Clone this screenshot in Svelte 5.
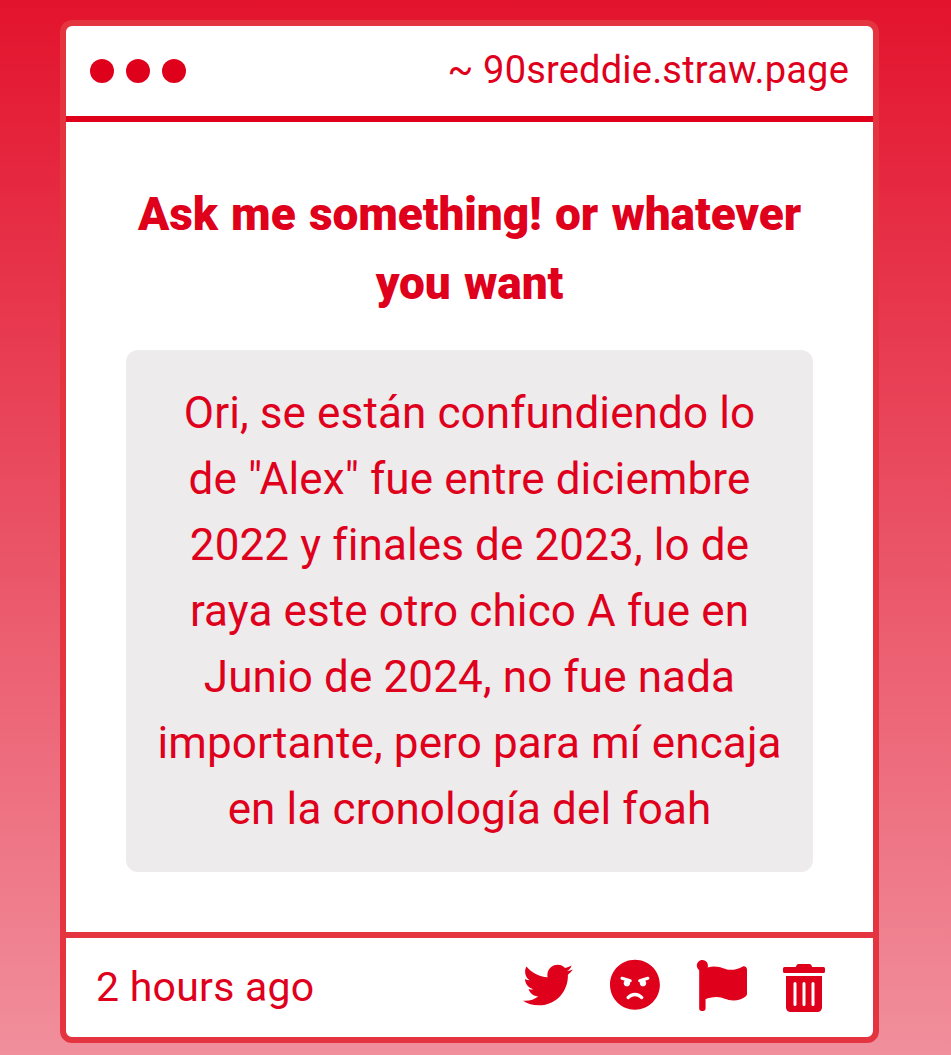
<script>
    let site = '90sreddie.straw.page';
    let title = 'Ask me something! or whatever you want';
    let message = 'Ori, se están confundiendo lo de "Alex" fue entre diciembre 2022 y finales de 2023, lo de raya este otro chico A fue en Junio de 2024, no fue nada importante, pero para mí encaja en la cronología del foah';
    let time = '2 hours ago';

    const actions = [
        {
            name: 'twitter',
            label: 'Share on Twitter',
            viewBox: '0 0 512 512',
            path: 'M459.37 151.716c.325 4.548.325 9.097.325 13.645 0 138.72-105.583 298.558-298.558 298.558-59.452 0-114.68-17.219-161.137-47.106 8.447.974 16.568 1.299 25.34 1.299 49.055 0 94.213-16.568 130.274-44.832-46.132-.975-84.792-31.188-98.112-72.772 6.498.974 12.995 1.624 19.818 1.624 9.421 0 18.843-1.3 27.614-3.573-48.081-9.747-84.143-51.98-84.143-102.985v-1.299c13.969 7.797 30.214 12.67 47.431 13.319-28.264-18.843-46.781-51.005-46.781-87.391 0-19.492 5.197-37.36 14.294-52.954 51.655 63.675 129.3 105.258 216.365 109.807-1.624-7.797-2.599-15.918-2.599-24.04 0-57.828 46.782-104.934 104.934-104.934 30.213 0 57.502 12.67 76.67 33.137 23.715-4.548 46.456-13.32 66.599-25.34-7.798 24.366-24.366 44.833-46.132 57.827 21.117-2.273 41.584-8.122 60.426-16.243-14.292 20.791-32.161 39.308-52.628 54.253z'
        },
        {
            name: 'angry',
            label: 'Block sender',
            viewBox: '0 0 496 512',
            path: 'M248 8C111 8 0 119 0 256s111 248 248 248 248-111 248-248S385 8 248 8zM136 240c0-9.3 4.1-17.5 10.5-23.4l-31-9.3c-8.5-2.5-13.3-11.5-10.7-19.9 2.5-8.5 11.4-13.2 19.9-10.7l80 24c8.5 2.5 13.3 11.5 10.7 19.9-2.1 6.9-8.4 11.4-15.3 11.4-.5 0-1.1-.2-1.7-.2.7 2.7 1.7 5.3 1.7 8.2 0 17.7-14.3 32-32 32S136 257.7 136 240zm168 154.2c-27.8-33.4-84.2-33.4-112.1 0-13.5 16.3-38.2-4.2-24.6-20.5 20-24 49.4-37.8 80.6-37.8s60.6 13.8 80.6 37.8c13.8 16.5-11.1 36.6-24.5 20.5zm76.6-186.9l-31 9.3c6.3 5.8 10.5 14.1 10.5 23.4 0 17.7-14.3 32-32 32s-32-14.3-32-32c0-2.9.9-5.6 1.7-8.2-.6.1-1.1.2-1.7.2-6.9 0-13.2-4.5-15.3-11.4-2.5-8.5 2.3-17.4 10.7-19.9l80-24c8.4-2.5 17.4 2.3 19.9 10.7 2.5 8.5-2.3 17.4-10.8 19.9z'
        },
        {
            name: 'flag',
            label: 'Report',
            viewBox: '0 0 512 512',
            path: 'M349.565 98.783C295.978 98.783 251.721 64 184.348 64c-24.955 0-47.309 4.384-68.045 12.013a55.947 55.947 0 0 0 3.586-23.562C118.117 24.015 94.806 1.206 66.338.048 34.345-1.254 8 24.296 8 56c0 19.026 9.497 35.825 24 45.945V488c0 13.255 10.745 24 24 24h16c13.255 0 24-10.745 24-24v-94.4c28.311-12.064 63.582-22.122 114.435-22.122 53.588 0 97.844 34.783 165.217 34.783 48.169 0 86.667-16.294 122.505-40.858C506.84 359.452 512 349.571 512 339.045v-243.1c0-23.393-24.269-38.87-45.485-29.016-34.338 15.948-76.454 31.854-116.95 31.854z'
        },
        {
            name: 'trash',
            label: 'Delete',
            viewBox: '0 0 448 512',
            path: 'M32 464a48 48 0 0 0 48 48h288a48 48 0 0 0 48-48V128H32zm272-256a16 16 0 0 1 32 0v224a16 16 0 0 1-32 0zm-96 0a16 16 0 0 1 32 0v224a16 16 0 0 1-32 0zm-96 0a16 16 0 0 1 32 0v224a16 16 0 0 1-32 0zM432 32H312l-9.4-18.7A24 24 0 0 0 281.1 0H166.8a23.72 23.72 0 0 0-21.4 13.3L136 32H16A16 16 0 0 0 0 48v32a16 16 0 0 0 16 16h416a16 16 0 0 0 16-16V48a16 16 0 0 0-16-16z'
        }
    ];
</script>

<style>
    :global(body) {
        background: #e3142e;
    }
    main {
        box-sizing: border-box;
        height: 1055px;
        padding: 20px 72px 12px 60px;
        background: linear-gradient(#e3132d, #f18f9c);
        color: #df001c;
        font-family: Roboto, sans-serif;
        overflow: hidden;
    }
    .card {
        box-sizing: border-box;
        display: flex;
        flex-direction: column;
        height: 1023px;
        border: 6px solid #e4343f;
        border-radius: 12px;
        background: #fff;
    }
    header {
        display: flex;
        flex-shrink: 0;
        align-items: center;
        justify-content: space-between;
        height: 90px;
        padding: 0 24px;
        border-bottom: 6px solid #df001c;
    }
    .dots {
        display: flex;
        gap: 12px;
    }
    .dots span {
        width: 24px;
        height: 24px;
        border-radius: 50%;
        background: #df001c;
    }
    .site {
        padding-bottom: 2px;
        font-size: 38px;
        letter-spacing: 0.2px;
    }
    .content {
        flex: 1;
        padding: 58px 60px 0;
        text-align: center;
    }
    h1 {
        margin: 0 0 32px;
        font-size: 46px;
        font-weight: 900;
        line-height: 69px;
        letter-spacing: -0.1px;
        word-spacing: 2px;
    }
    .message {
        margin: 0;
        padding: 30px;
        border-radius: 12px;
        background: #edebec;
        font-size: 44px;
        line-height: 66px;
        letter-spacing: 0.12px;
    }
    footer {
        display: flex;
        flex-shrink: 0;
        align-items: center;
        justify-content: space-between;
        box-sizing: border-box;
        height: 105px;
        padding: 0 48px 5px 30px;
        border-top: 6px solid #e4343f;
    }
    .time {
        padding-top: 4px;
        font-size: 41px;
        letter-spacing: 0.25px;
    }
    .actions {
        display: flex;
        align-items: center;
        gap: 36px;
    }
    button {
        display: flex;
        padding: 0;
        border: none;
        background: none;
        color: inherit;
        cursor: pointer;
    }
    svg {
        display: block;
        height: 51px;
        fill: currentColor;
    }
    .angry {
        height: 51.5px;
    }
    .twitter {
        height: 50px;
        margin-right: 1px;
    }
    .trash {
        height: 48px;
        margin-top: 6px;
    }
</style>

<main>
    <div class="card">
        <header>
            <div class="dots">
                <span></span>
                <span></span>
                <span></span>
            </div>
            <div class="site">~ {site}</div>
        </header>
        <div class="content">
            <h1>{title}</h1>
            <p class="message">{message}</p>
        </div>
        <footer>
            <div class="time">{time}</div>
            <div class="actions">
                {#each actions as action}
                    <button aria-label={action.label}>
                        <svg class={action.name} viewBox={action.viewBox}>
                            <path d={action.path} />
                        </svg>
                    </button>
                {/each}
            </div>
        </footer>
    </div>
</main>
